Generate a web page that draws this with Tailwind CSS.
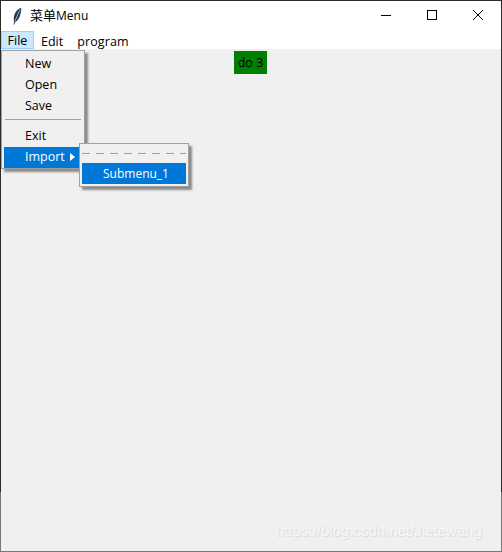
<!DOCTYPE html>
<html>
<head>
<meta charset="utf-8">
<script src="https://cdn.jsdelivr.net/npm/@tailwindcss/browser@4"></script>
</head>
<body class="m-0 bg-[#f0f0f0]">
<div class="relative w-[502px] h-[552px] overflow-hidden flex flex-col bg-[#f0f0f0] text-[13px] text-black font-['Open_Sans','Noto_Sans_CJK_SC',sans-serif]">
  <!-- title bar -->
  <div class="h-[31px] shrink-0 bg-white flex items-center">
    <svg class="ml-[12px] w-[10px] h-[18px]" viewBox="0 0 10 18"><path d="M9 1C6 1.500 3 5 2 9.500C1.600 12 1.700 14 2.300 15L1.300 17.500L2.200 17.500L3.200 15C6 14 7.800 10 8.600 6.500C9.200 4.500 9.500 2.500 9 1Z" fill="#27384f"/><path d="M8 2.500L3 14" stroke="#8fb4dc" stroke-width="1" fill="none"/></svg>
    <span class="ml-[8px] text-[13px] leading-none">菜单<span class="text-[12px]">Menu</span></span>
    <div class="ml-auto flex items-center">
      <svg class="w-[46px] h-[31px]" viewBox="0 0 46 31"><path d="M18 15.500H28" stroke="#000" stroke-width="1"/></svg>
      <svg class="w-[46px] h-[31px]" viewBox="0 0 46 31"><rect x="18.500" y="10.500" width="9" height="9" fill="none" stroke="#000" stroke-width="1"/></svg>
      <svg class="w-[46px] h-[31px] mr-[1px]" viewBox="0 0 46 31"><path d="M18 10L28 20M28 10L18 20" stroke="#000" stroke-width="1"/></svg>
    </div>
  </div>
  <!-- menu bar -->
  <div class="h-[18px] shrink-0 bg-white flex items-center text-[12.500px] leading-none">
    <div class="ml-px w-[33px] h-[18px] bg-[#cce8ff] border border-[#99d1ff] flex items-center justify-center pt-[3px]">File</div>
    <span class="ml-[7px] pt-[4px]">Edit</span>
    <span class="ml-[14px] pt-[4px] tracking-[0.1px]">program</span>
  </div>
  <!-- content -->
  <div class="flex-1 bg-[#f0f0f0] flex justify-center pt-[2px] pr-[1px]">
    <div class="w-[33px] h-[23px] bg-[#008000] flex items-center justify-center text-[12.500px] leading-none pt-[2px]">do 3</div>
  </div>

  <!-- File menu -->
  <div class="absolute left-px top-[50px] w-[84px] h-[119px] bg-[#f0f0f0] border border-[#a0a0a0] shadow-[3px_3px_2px_rgba(0,0,0,0.42)] flex flex-col text-[12.500px] leading-none px-[2px]">
    <div class="h-[21px] mt-[2px] flex items-center pl-[21px] pt-[2px]">New</div>
    <div class="h-[21px] flex items-center pl-[21px] pt-[2px]">Open</div>
    <div class="h-[21px] flex items-center pl-[21px] pt-[2px]">Save</div>
    <div class="h-[9px] flex items-center pl-px pr-px"><div class="w-full h-px bg-[#a0a0a0] -mt-[3px]"></div></div>
    <div class="h-[21px] mt-px flex items-center pl-[21px]">Exit</div>
    <div class="h-[21px] bg-[#0078d7] text-white flex items-center pl-[21px] -mr-[2px]">Import
      <svg class="ml-[5px] w-[5px] h-[8px] -mt-[2px]" viewBox="0 0 5 8"><path d="M0 0L5 4L0 8Z" fill="#fff"/></svg>
    </div>
  </div>

  <!-- Submenu -->
  <div class="absolute left-[79px] top-[143px] w-[110px] h-[44px] bg-[#f0f0f0] border border-[#a0a0a0] shadow-[3px_3px_2px_rgba(0,0,0,0.42)] px-[2px] flex flex-col text-[12px] leading-none">
    <div class="h-[18px] flex items-center"><div class="w-full h-px bg-[repeating-linear-gradient(90deg,#a0a0a0_0,#a0a0a0_8px,transparent_8px,transparent_14px)]"></div></div>
    <div class="h-[21px] mt-px bg-[#0078d7] text-white flex items-center pl-[21px]">Submenu_1</div>
  </div>

  <!-- watermark -->
  <div class="absolute left-[276px] top-[523px] text-[15px] leading-none text-[#f6f6f6] [text-shadow:1px_1px_1px_#d8d8d8] font-['Liberation_Sans',sans-serif]">https://blog.csdn.net/Jietewang</div>

  <!-- window frame -->
  <div class="absolute left-0 right-0 top-0 h-px bg-[#2b2b2b]"></div>
  <div class="absolute left-0 top-0 w-px h-[492px] bg-[#2b2b2b]"></div>
  <div class="absolute right-0 top-0 w-px h-[492px] bg-[#2b2b2b]"></div>
  <div class="absolute left-0 top-[492px] w-px h-[60px] bg-[#777777]"></div>
  <div class="absolute right-0 top-[492px] w-px h-[60px] bg-[#777777]"></div>
  <div class="absolute left-0 right-0 bottom-0 h-px bg-[#777777]"></div>
</div>
</body>
</html>
